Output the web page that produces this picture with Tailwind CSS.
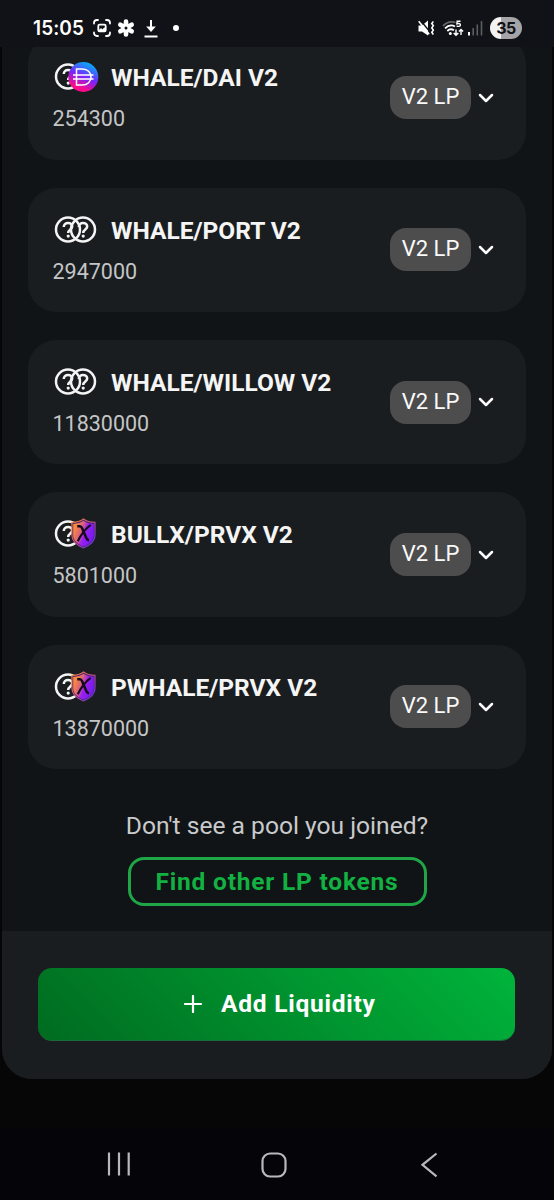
<!DOCTYPE html>
<html lang="en">
<head>
<meta charset="utf-8">
<title>Liquidity</title>
<script src="https://cdn.jsdelivr.net/npm/@tailwindcss/browser@4"></script>
</head>
<body class="w-[554px] h-[1200px] overflow-hidden bg-[#060606] font-[Roboto,sans-serif] flex flex-col">
<svg class="absolute w-0 h-0">
  <defs>
    <linearGradient id="dai" x1="0.75" y1="0" x2="0.3" y2="1"><stop offset="0.08" stop-color="#0aa5fb"/><stop offset="0.5" stop-color="#7a22fb"/><stop offset="0.85" stop-color="#fb0a8c"/></linearGradient>
    <linearGradient id="shield" x1="0" y1="0.2" x2="1" y2="0.65"><stop offset="0.1" stop-color="#f98a3c"/><stop offset="0.38" stop-color="#d9607c"/><stop offset="0.58" stop-color="#9a20f0"/><stop offset="1" stop-color="#7318f0"/></linearGradient>
    <linearGradient id="rim" x1="0" y1="0" x2="1" y2="1"><stop offset="0" stop-color="#f98a2c"/><stop offset="0.45" stop-color="#c0527a"/><stop offset="1" stop-color="#4a35e8"/></linearGradient>
    <symbol id="q" viewBox="0 0 28 28"><circle cx="14" cy="14" r="12" fill="none" stroke="#f4f4f4" stroke-width="2.500"/><path d="M9.800 11.400c0-2.300 1.700-4 4.200-4s4.200 1.600 4.200 3.700c0 2.800-4 3-4 6.300" fill="none" stroke="#f4f4f4" stroke-width="2.500"/><circle cx="14.200" cy="20.600" r="1.600" fill="#f4f4f4"/></symbol>
    <symbol id="down" viewBox="0 0 16 10"><path d="M2 2l6 6 6-6" fill="none" stroke="#fafafa" stroke-width="2.500" stroke-linecap="round" stroke-linejoin="round"/></symbol>
    <symbol id="prvx" viewBox="0 0 26 32"><path d="M1 4.500C6 4.500 10 3.200 13 1c3 2.200 7 3.500 12 3.500V18c0 6-5 10-12 13C6 28 1 24 1 18z" fill="#4a1d75" stroke="url(#rim)" stroke-width="1.200"/><path d="M2.300 6c4-.2 8-1.300 10.700-3.200 2.700 1.900 6.700 3 10.700 3.200v12c0 5.200-4.300 8.900-10.700 11.600C6.600 26.900 2.300 23.200 2.300 18z" fill="url(#shield)"/><path d="M6.500 8.500h2.700c1.400 0 1.900.8 2.500 2.300L16 21c.6 1.400 1.400 1.900 2.800 1.900" fill="none" stroke="#150b1c" stroke-width="2.600"/><path d="M20.500 7C15 11 10.500 17 7 24" fill="none" stroke="#150b1c" stroke-width="2.100"/></symbol>
  </defs>
</svg>

<header class="relative z-10 h-[47px] shrink-0 bg-[#111217] flex items-center pl-[33px] pr-8 pt-[9px]">
  <span class="text-white font-semibold text-[20px] leading-6 tracking-[0.1px] w-[60px] font-[Inter,sans-serif] whitespace-nowrap"><span class="inline-block origin-left scale-x-[0.95]">15:05</span></span>
  <svg class="w-[18px] h-[18px]" viewBox="0 0 18 18" fill="none" stroke="#fff" stroke-width="1.800" stroke-linecap="round"><path d="M1 4.500V4a3 3 0 0 1 3-3h1M13 1h1a3 3 0 0 1 3 3v.5M17 13.500v.5a3 3 0 0 1-3 3h-1M5 17H4a3 3 0 0 1-3-3v-.5"/><rect x="5.300" y="5.600" width="7.400" height="6.800" rx="1.300"/><path d="M5.500 11.500l2.500-2 1.500 1 2-1.800 1 1v2.500H6z" fill="#fff" stroke-width=".6"/></svg>
  <svg class="w-[18px] h-[18px] ml-[6px]" viewBox="-9 -9 18 18" fill="none" stroke="#fff" stroke-width="4.600" stroke-linecap="round"><path d="M0-3.800v-2.700M0 3.800v2.700M3.300-1.900l2.400-1.400M-3.300 1.900l-2.400 1.400M3.300 1.900l2.400 1.400M-3.300-1.900l-2.400-1.400"/><circle r="2.300" stroke-width="1.200"/></svg>
  <svg class="w-[14px] h-[19px] ml-[9px]" viewBox="0 0 14 19"><path d="M7 1v8M.5 17.500h13" stroke="#fff" stroke-width="2"/><path d="M2.200 7.500h9.600L7 13z" fill="#fff"/></svg>
  <span class="ml-[15px] size-[6px] rounded-full bg-white"></span>
  <svg class="ml-auto w-[17px] h-[17px]" viewBox="0 0 17 17"><path d="M.5 5.500H4l6-5v15l-6-4H.5z" fill="#fff"/><path d="M2.200 0l9.500 11.500" stroke="#111217" stroke-width="1.400"/><path d="M.7 1.200l10.500 13" stroke="#fff" stroke-width="1.600"/><path d="M15.300 1.500l-1.500 2 1.500 2.200-1.500 2.200 1.500 2.200-1.500 2.200 1.500 2.200" fill="none" stroke="#fff" stroke-width="1.600"/></svg>
  <svg class="ml-[7px] w-[22px] h-[17px]" viewBox="0 0 22 17" fill="none"><path d="M1 6C4 2.500 9 1 13.500 2.500" stroke="#66676b" stroke-width="1.700"/><path d="M3 8.300C6 5.300 10 4.700 13 6.500M5.300 11c2-2 4.500-2.200 6.600-.7" stroke="#fff" stroke-width="1.800"/><circle cx="8.300" cy="13.500" r="1.500" fill="#fff"/><path d="M18.500 1.300H15.200l-.3 2.500c2-.7 3.700-.1 3.500 1.300-.2 1.600-2.300 1.600-3.800.7" stroke="#fff" stroke-width="1.400"/><path d="M14 9.500V15M11.700 12.900L14 15.200l2.300-2.300M19 15v-5.500M16.900 11.600L19 9.500l2.100 2.100" stroke="#fff" stroke-width="1.400"/></svg>
  <svg class="ml-[4px] w-[15px] h-[16px]" viewBox="0 0 15 16"><rect x="0" y="12" width="2" height="3.500" fill="#fff"/><path d="M5.200 8v7.500M9.300 4.500v11M13.500 1v14.500" stroke="#5c5d61" stroke-width="1.600"/></svg>
  <span class="ml-[7px] w-8 h-[22px] rounded-full bg-linear-to-r from-[#f3f3f4] from-35% to-[#a5a5a8] to-35% text-[#111217] text-[16px] leading-[22px] text-center font-bold font-[Inter,sans-serif] tracking-[-0.6px]">35</span>
</header>

<div class="mx-[2px] h-[1031.500px] shrink-0 bg-[#101416] rounded-b-[30px] overflow-hidden flex flex-col">
  <main class="h-[895.500px] shrink-0 -mt-[11.500px] px-[26px] flex flex-col gap-7 box-border">
    <section class="h-[124.300px] shrink-0 rounded-[28px] bg-[#1a1d1f] pl-[24.500px] pr-[32px] flex items-center">
      <div class="flex-1 flex flex-col gap-[11px] pt-[2.400px]">
        <div class="h-[30px] flex items-center"><svg class="w-[58.500px] h-8 shrink-0" viewBox="0 0 58.500 32"><use href="#q" x="1" y="0.500" width="28" height="28"/><circle cx="30.300" cy="15" r="15" fill="url(#dai)"/><g fill="none" stroke="#fff" stroke-width="1.500"><path d="M23.500 7h6c5 0 8.500 3.500 8.500 8s-3.500 8-8.500 8h-6zM20 13h20.500M20 17h20.500"/></g></svg><h2 class="text-[24.500px] leading-[30px] font-bold text-[#f5f5f5] whitespace-nowrap">WHALE/DAI V2</h2></div>
        <p class="text-[21.500px] leading-[30px] text-[#c4c5c6]">254300</p>
      </div>
      <span class="w-[81px] h-[43px] rounded-2xl bg-[#4d4d4d] text-[#fafafa] text-[22px] leading-[42px] text-center">V2 LP</span>
      <svg class="ml-[7px] w-4 h-[10px]"><use href="#down"/></svg>
    </section>
    <section class="h-[124.300px] shrink-0 rounded-[28px] bg-[#1a1d1f] pl-[24.500px] pr-[32px] flex items-center">
      <div class="flex-1 flex flex-col gap-[11px] pt-[2.400px]">
        <div class="h-[30px] flex items-center"><svg class="w-[58.500px] h-8 shrink-0" viewBox="0 0 58.500 32"><use href="#q" x="1" y="0.500" width="28" height="28"/><use href="#q" x="16" y="0.500" width="28" height="28"/></svg><h2 class="text-[24.500px] leading-[30px] font-bold text-[#f5f5f5] whitespace-nowrap">WHALE/PORT V2</h2></div>
        <p class="text-[21.500px] leading-[30px] text-[#c4c5c6]">2947000</p>
      </div>
      <span class="w-[81px] h-[43px] rounded-2xl bg-[#4d4d4d] text-[#fafafa] text-[22px] leading-[42px] text-center">V2 LP</span>
      <svg class="ml-[7px] w-4 h-[10px]"><use href="#down"/></svg>
    </section>
    <section class="h-[124.300px] shrink-0 rounded-[28px] bg-[#1a1d1f] pl-[24.500px] pr-[32px] flex items-center">
      <div class="flex-1 flex flex-col gap-[11px] pt-[2.400px]">
        <div class="h-[30px] flex items-center"><svg class="w-[58.500px] h-8 shrink-0" viewBox="0 0 58.500 32"><use href="#q" x="1" y="0.500" width="28" height="28"/><use href="#q" x="16" y="0.500" width="28" height="28"/></svg><h2 class="text-[24.500px] leading-[30px] font-bold text-[#f5f5f5] whitespace-nowrap">WHALE/WILLOW V2</h2></div>
        <p class="text-[21.500px] leading-[30px] text-[#c4c5c6]">11830000</p>
      </div>
      <span class="w-[81px] h-[43px] rounded-2xl bg-[#4d4d4d] text-[#fafafa] text-[22px] leading-[42px] text-center">V2 LP</span>
      <svg class="ml-[7px] w-4 h-[10px]"><use href="#down"/></svg>
    </section>
    <section class="h-[124.300px] shrink-0 rounded-[28px] bg-[#1a1d1f] pl-[24.500px] pr-[32px] flex items-center">
      <div class="flex-1 flex flex-col gap-[11px] pt-[2.400px]">
        <div class="h-[30px] flex items-center"><svg class="w-[58.500px] h-8 shrink-0 overflow-visible" viewBox="0 0 58.500 32"><use href="#q" x="1" y="0.500" width="28" height="28"/><use href="#prvx" x="18" y="-1" width="25" height="31"/></svg><h2 class="text-[24.500px] leading-[30px] font-bold text-[#f5f5f5] whitespace-nowrap">BULLX/PRVX V2</h2></div>
        <p class="text-[21.500px] leading-[30px] text-[#c4c5c6]">5801000</p>
      </div>
      <span class="w-[81px] h-[43px] rounded-2xl bg-[#4d4d4d] text-[#fafafa] text-[22px] leading-[42px] text-center">V2 LP</span>
      <svg class="ml-[7px] w-4 h-[10px]"><use href="#down"/></svg>
    </section>
    <section class="h-[124.300px] shrink-0 rounded-[28px] bg-[#1a1d1f] pl-[24.500px] pr-[32px] flex items-center">
      <div class="flex-1 flex flex-col gap-[11px] pt-[2.400px]">
        <div class="h-[30px] flex items-center"><svg class="w-[58.500px] h-8 shrink-0 overflow-visible" viewBox="0 0 58.500 32"><use href="#q" x="1" y="0.500" width="28" height="28"/><use href="#prvx" x="18" y="-1" width="25" height="31"/></svg><h2 class="text-[24.500px] leading-[30px] font-bold text-[#f5f5f5] whitespace-nowrap">PWHALE/PRVX V2</h2></div>
        <p class="text-[21.500px] leading-[30px] text-[#c4c5c6]">13870000</p>
      </div>
      <span class="w-[81px] h-[43px] rounded-2xl bg-[#4d4d4d] text-[#fafafa] text-[22px] leading-[42px] text-center">V2 LP</span>
      <svg class="ml-[7px] w-4 h-[10px]"><use href="#down"/></svg>
    </section>
    <div class="mt-[13px] flex flex-col items-center">
      <p class="text-[24.600px] leading-[32px] text-[#c9cacb] whitespace-nowrap">Don't see a pool you joined?</p>
      <button class="mt-[15px] w-[299px] h-[49px] rounded-2xl border-3 border-[#1fa747] text-[#12b141] text-[24.500px] leading-[43px] font-bold tracking-[0.8px] whitespace-nowrap">Find other LP tokens</button>
    </div>
  </main>
  <footer class="flex-1 bg-[#1a1d20] px-[36.400px] pt-[36.500px]">
    <button class="w-[477px] h-[73.500px] rounded-[14px] bg-linear-[45deg,#006b20,#00b43b] border-b border-[#1c6b3c] flex items-center justify-center text-white text-[24.500px] font-bold tracking-[0.75px] whitespace-nowrap pt-px">
      <svg class="w-[18px] h-[18px] ml-[6px] mr-[19px]" viewBox="0 0 18 18"><path d="M9 1v16M1 9h16" stroke="#fff" stroke-width="2.200" stroke-linecap="round"/></svg><span class="pt-px">Add Liquidity</span>
    </button>
  </footer>
</div>

<nav class="mt-auto h-[72px] shrink-0 bg-[#050409] flex items-start pt-[24px] pl-[107px]">
  <svg class="w-6 h-6" viewBox="0 0 24 24"><path d="M2 .5v23M12 .5v23M21.700 .5v23" stroke="#b9b9bc" stroke-width="2.200"/></svg>
  <svg class="w-[26px] h-[26px] ml-[130px]" viewBox="0 0 26 26"><rect x="1.500" y="1.500" width="23" height="23" rx="7.500" fill="none" stroke="#b9b9bc" stroke-width="2.200"/></svg>
  <svg class="w-[17px] h-[26px] ml-[134px]" viewBox="0 0 17 26"><path d="M15.500 1.500L1.500 12.800l14 11.500" fill="none" stroke="#b9b9bc" stroke-width="2.200"/></svg>
</nav>
</body>
</html>
